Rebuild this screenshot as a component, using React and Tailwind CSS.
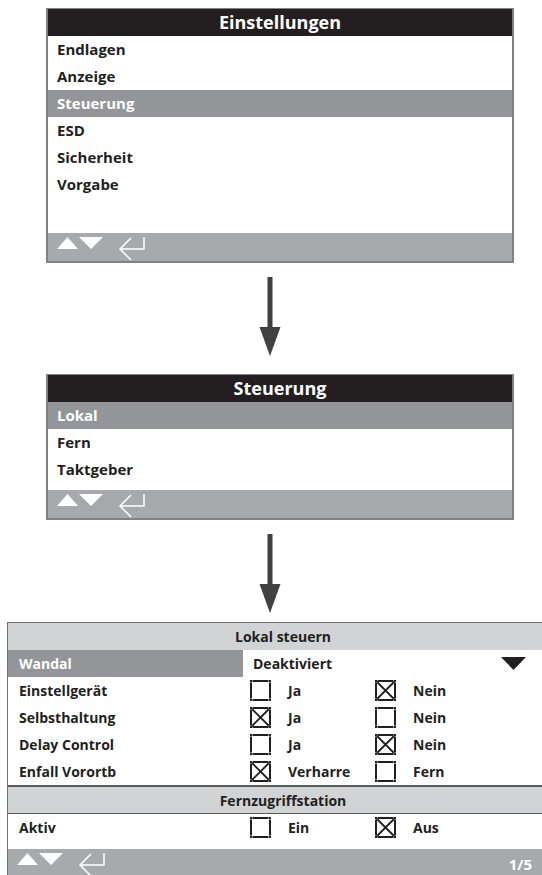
import React from 'react';

const FooterIcons = () => (
  <svg width="92" height="28" viewBox="0 0 92 28">
    <polygon points="0,16 10.5,4 21,16" fill="#fff" />
    <polygon points="22,4 46,4 34,16" fill="#fff" />
    <path d="M87 4 V16 H63 M74 5 L63 16 L74 27" fill="none" stroke="#fff" strokeWidth="1.5" />
  </svg>
);

const DownArrow = () => (
  <svg width="22" height="79" viewBox="0 0 22 79">
    <rect x="8.5" y="0" width="5" height="52" fill="#414042" />
    <polygon points="0.5,50 21.5,50 11,79" fill="#414042" />
  </svg>
);

const CheckBox = ({ checked }) => (
  <svg width="21" height="21" viewBox="0 0 21 21" className="shrink-0">
    <path d="M1 2.5 V18.5 M20 2.5 V18.5 M2.5 1 H18.5 M2.5 20 H18.5" stroke="#231f20" strokeWidth="2" />
    <rect x="0" y="0" width="2" height="2" fill="#231f20" />
    <rect x="19" y="0" width="2" height="2" fill="#231f20" />
    <rect x="0" y="19" width="2" height="2" fill="#231f20" />
    <rect x="19" y="19" width="2" height="2" fill="#231f20" />
    {checked && <path d="M2 2 L19 19 M19 2 L2 19" stroke="#231f20" strokeWidth="1.8" />}
  </svg>
);

function MenuPanel({ title, items, selected, blank }) {
  return (
    <div className="ml-[46px] w-[468px] border-x-2 border-b-2 border-t border-[#808285] bg-white">
      <div className="h-[27px] bg-[#231f20] text-white text-[18px] font-bold flex items-center justify-center">
        {title}
      </div>
      {items.map((item) => (
        <div
          key={item}
          className={
            item === selected
              ? 'h-[27px] flex items-center pl-[9px] text-[15px] font-bold bg-[#939598] text-white'
              : 'h-[27px] flex items-center pl-[9px] text-[15px] font-bold text-[#231f20]'
          }
        >
          {item}
        </div>
      ))}
      <div className={blank} />
      <div className="h-[28px] bg-[#a7a9ac] flex items-start pl-[9px]">
        <FooterIcons />
      </div>
    </div>
  );
}

function OptionRow({ label, a, b, pick }) {
  return (
    <div className="h-[27px] flex items-center text-[14px] font-bold text-[#231f20]">
      <div className="w-[235px] pl-[11px]">{label}</div>
      <div className="w-[132px] pl-[7px] flex items-center">
        <CheckBox checked={pick === 0} />
        <span className="ml-[17px]">{a}</span>
      </div>
      <div className="flex items-center">
        <CheckBox checked={pick === 1} />
        <span className="ml-[17px]">{b}</span>
      </div>
    </div>
  );
}

export default function App() {
  return (
    <div className="w-[542px] h-[875px] overflow-hidden bg-white font-['Open_Sans',sans-serif] pt-[8px]">
      <MenuPanel
        title="Einstellungen"
        items={['Endlagen', 'Anzeige', 'Steuerung', 'ESD', 'Sicherheit', 'Vorgabe']}
        selected="Steuerung"
        blank="h-[35px]"
      />

      <div className="flex justify-center ml-[-2px] mt-[14px] mb-[18px]">
        <DownArrow />
      </div>

      <MenuPanel
        title="Steuerung"
        items={['Lokal', 'Fern', 'Taktgeber']}
        selected="Lokal"
        blank="h-[7px]"
      />

      <div className="flex justify-center ml-[-2px] mt-[14px] mb-[9px]">
        <DownArrow />
      </div>

      <div className="ml-[7px] w-[551px] border-l-[1.5px] border-t-[1.5px] border-[#6d6e71] bg-white">
        <div className="h-[27px] bg-[#d1d3d4] flex items-center justify-center text-[14px] font-bold text-[#231f20]">
          Lokal steuern
        </div>
        <div className="h-[27px] flex items-center text-[14px] font-bold">
          <div className="w-[235px] h-full bg-[#939598] text-white pl-[11px] flex items-center">Wandal</div>
          <div className="pl-[10px] text-[#231f20]">Deaktiviert</div>
          <svg width="25" height="13" viewBox="0 0 25 13" className="ml-[169px]">
            <polygon points="0,0 25,0 12.5,13" fill="#231f20" />
          </svg>
        </div>
        <OptionRow label="Einstellgerät" a="Ja" b="Nein" pick={1} />
        <OptionRow label="Selbsthaltung" a="Ja" b="Nein" pick={0} />
        <OptionRow label="Delay Control" a="Ja" b="Nein" pick={1} />
        <OptionRow label="Enfall Vorortb" a="Verharre" b="Fern" pick={0} />
        <div className="h-[26px] border-t-2 border-b-[1.5px] border-[#58595b] bg-[#d1d3d4] flex items-center justify-center text-[14px] font-bold text-[#231f20] box-content">
          Fernzugriffstation
        </div>
        <OptionRow label="Aktiv" a="Ein" b="Aus" pick={1} />
        <div className="h-[8px]" />
        <div className="h-[30px] bg-[#a7a9ac] flex items-start justify-between pl-[9px] pr-[26px]">
          <FooterIcons />
          <span className="text-white text-[15px] leading-[18px] font-bold mt-[6px]">1/5</span>
        </div>
      </div>
    </div>
  );
}
